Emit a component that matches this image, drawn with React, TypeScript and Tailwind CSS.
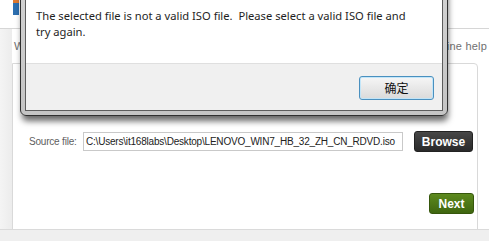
export default function App() {
  return (
    <div className="relative w-[489px] h-[241px] overflow-hidden bg-white" style={{ fontFamily: '"Liberation Sans", Arial, sans-serif' }}>
      {/* background app window */}
      <div className="flex flex-col h-full">
        <div className="h-[29px] shrink-0 bg-white border-b border-[#d6d6d6] flex items-start pl-[13px]">
          <div className="flex flex-col w-[6px]">
            <div className="h-[3px] bg-[#e07a30]" />
            <div className="h-[12px] bg-[#2d6fb0]" />
          </div>
        </div>
        <div className="flex flex-1 min-h-0">
          <div className="w-[12px] shrink-0 bg-gradient-to-r from-[#f4f4f4] to-[#ececec]" />
          <div className="flex flex-col flex-1 min-w-0">
            <div className="h-[34px] shrink-0 flex items-center justify-between pl-[2px] pr-[2px] text-[11px] text-[#707070]">
              <span>Welcome</span>
              <span className="tracking-[0.2px]">Online help</span>
            </div>
            <div className="flex-1 w-[466px] bg-white border border-[#d9d9d9] rounded-tr-[4px] flex flex-col pt-[67px] pl-[16px] pr-[3px]">
              <div className="flex items-center">
                <span className="w-[54px] text-[10px] tracking-[-0.2px] text-[#606060]">Source file:</span>
                <div className="w-[320px] h-[19px] border border-[#c9c9c9] bg-white flex items-center pl-[2px] text-[10px] tracking-[-0.2px] text-[#222] whitespace-nowrap overflow-hidden">
                  C:\Users\it168labs\Desktop\LENOVO_WIN7_HB_32_ZH_CN_RDVD.iso
                </div>
                <div className="ml-[11px] w-[59px] h-[21px] rounded-[3px] bg-gradient-to-b from-[#474747] to-[#2a2a2a] border border-[#222] flex items-center justify-center text-white font-bold text-[12px]">
                  Browse
                </div>
              </div>
              <div className="mt-[41px] self-end w-[45px] h-[21px] rounded-[3px] bg-gradient-to-b from-[#5d8a1e] to-[#3f6610] border border-[#36570c] flex items-center justify-center text-white font-bold text-[12px]">
                Next
              </div>
            </div>
            <div className="h-[11px] shrink-0" />
          </div>
        </div>
      </div>
      <div className="absolute left-0 right-0 bottom-0 h-[12px] bg-[#efefef] border-t border-[#dadada]" />

      {/* modal dialog */}
      <div className="absolute left-[20px] top-[-40px] w-[428px] h-[156px] rounded-[6px] border border-[#2f2f2f] bg-gradient-to-b from-[#d4d4d4] to-[#c4c4c4] p-[4px] shadow-[1px_6px_6px_-1px_rgba(0,0,0,0.6)]">
        <div className="h-full border border-[#5c5c5c] flex flex-col bg-white">
          <div className="h-[97px] shrink-0 bg-white pt-[42px] pl-[10px] text-[11.2px] leading-[16px] text-[#1e1e1e]" style={{ fontFamily: '"Noto Sans", "Open Sans", sans-serif' }}>
            <p>The selected file is not a valid ISO file.&nbsp; Please select a valid ISO file and</p>
            <p>try again.</p>
          </div>
          <div className="flex-1 bg-[#f0f0f0] border-t border-[#dfdfdf] flex justify-end items-start pt-[12px] pr-[8px]">
            <div className="w-[75px] h-[24px] rounded-[3px] border border-[#4a90bf] bg-gradient-to-b from-[#f6f6f6] to-[#dadada] shadow-[inset_0_0_0_1px_rgba(190,228,250,0.9)] flex items-center justify-center text-[12px] text-[#111]" style={{ fontFamily: '"Noto Sans CJK SC", sans-serif' }}>
              确定
            </div>
          </div>
        </div>
      </div>
    </div>
  );
}
